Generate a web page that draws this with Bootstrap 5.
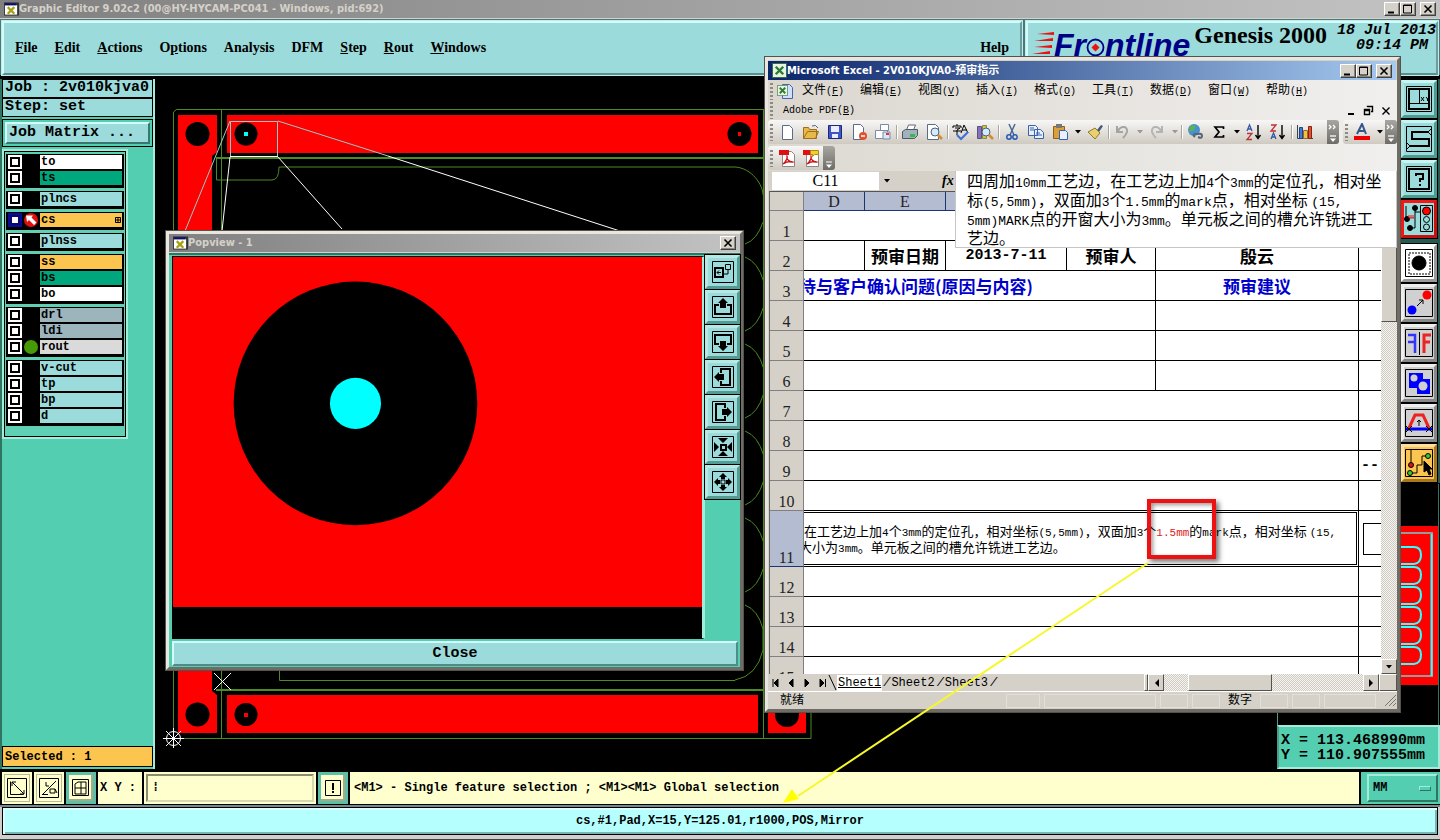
<!DOCTYPE html>
<html lang="en">
<head>
<meta charset="utf-8">
<meta name="viewport" content="width=device-width, initial-scale=1">
<title>Graphic Editor 9.02c2</title>
<link rel="stylesheet" href="https://cdn.jsdelivr.net/npm/bootstrap@5.3.0/dist/css/bootstrap.min.css">
<script src="https://cdn.jsdelivr.net/npm/bootstrap@5.3.0/dist/js/bootstrap.bundle.min.js"></script>
<style>
:root{--aqua:#9cdbdb;--teal:#54ceb0;--hi:#d3fbfa;--lo:#4f8383;--tealhi:#a2ecd9;--teallo:#2f7562;--win:#d5d1c9;--cream:#ffffce;--gold:#fcc550;--green:#4c8a22}
body{font-family:"Liberation Sans","Noto Sans CJK SC",sans-serif;background:#000;color:#000;font-size:12px;line-height:16px}
button,input,select{font:inherit;color:inherit;padding:0;border-radius:0}
button{display:inline-flex;align-items:center;justify-content:center}
svg{display:block;flex:none}
a{color:inherit;text-decoration:none}
.mono15{font:bold 15px/16px "Liberation Mono",monospace}
.mono12{font:bold 12px/14px "Liberation Mono",monospace}
.caption{font:bold 11px/16px "DejaVu Sans Condensed","Noto Sans CJK SC",sans-serif;white-space:nowrap}
.winbtn{width:16px;height:14px;background:var(--win);border:1px solid;border-color:#fff #404040 #404040 #fff;box-shadow:inset -1px -1px #8a8780}
.titlebar{height:19px;background:linear-gradient(90deg,#808080,#c3c3c3);color:#d5d1c9;border-bottom:1px solid #d5d1c9}
/* top band */
.topband{height:56px;background:#4d7777;gap:4px;padding:2px 2px 0}
.bevel{background:var(--aqua);border:2px solid;border-color:var(--hi) var(--lo) var(--lo) var(--hi)}
.topband .bevel{border-color:var(--hi) #6d9c9c #5e8e8e var(--hi);outline:1px solid #bdeeee}
.mainmenu{gap:17px;font:bold 14px/18px "Liberation Serif",serif;padding:0 11px}
.brandbox{width:412px;padding-left:4px}
.brandname{font:italic bold 32px/32px "Liberation Sans",sans-serif;color:#000087;margin-top:6px}
.product{font:bold 24px/24px "Liberation Serif",serif}
.clock{font:italic bold 15px/15px "Liberation Mono",monospace}
/* layer column */
.side{width:155px;background:var(--teal);border-left:2px solid var(--teallo);border-right:2px solid var(--tealhi)}
.readbox{background:var(--aqua);border:1px solid #000;height:19px;padding:0 2px;white-space:nowrap}
.selbox{background:var(--gold);height:21px;padding-top:3px;margin-bottom:2px}
.jobframe{border:1px solid #000;padding:2px;margin-top:2px}
.jobbtn{height:22px;background:var(--aqua);border:2px solid;border-color:var(--hi) #39776e #39776e var(--hi);padding:0 2px}
.layers{width:122px;border:1px solid #000;outline:2px solid var(--tealhi);padding:2px 1px 10px;gap:3px;background:#5fd0b4;margin:4px 0 0 2px}
.lgroup{background:#000;padding:1px 2px}
.lrow{height:16px}
.lrow label{flex:1;height:14px;padding-left:1px;background:var(--aqua);color:#000}
.lrow input{appearance:none;width:14px;height:14px;margin:0;border:2px solid #fff;background:#fff;box-shadow:inset 0 0 0 2px #000}
.lrow input:checked{border-color:#0a0a9c;box-shadow:inset 0 0 0 2px #0a0a6c}
.lrow svg{width:18px;height:14px}
.lrow .l-white{background:#fff}.lrow .l-green{background:#00a67c}.lrow .l-gold{background:var(--gold)}.lrow .l-slate{background:#9cb4bc}.lrow .l-gray{background:#dadada}
/* right column */
.rightcol{width:163px}
.workarea{padding:4px 0 2px}
.rail{width:39px;background:#245a50;padding:1px 2px 1px 0;gap:2px}
.rail button{width:36px;height:38px;border:3px solid;border-color:#c8f4f1 #4e9b92 #4e9b92 #b0e4e0;background:var(--aqua);outline:1px solid #000}
.rail button.grayed{background:#d0d0d0;border-color:#eee #888 #888 #eee}
.rail button.whited{background:#fff;border-color:#fff #999 #999 #fff}
.rail button.golden{background:var(--gold);border-color:#ffe0a0 #a87820 #a87820 #ffe0a0}
.rail button.redded{border-color:#f21818 #c81010 #c81010 #f21818}
.coords{height:44px;background:var(--teal);border:2px solid;border-color:var(--tealhi) var(--tealhi) var(--tealhi) #4f9c88;padding:6px 2px 0}
.coords div{line-height:15px}
/* command bar */
.cmdbar{height:34px;gap:2px;padding:1px 0 1px 2px}
.cmdbar .cream{background:var(--cream)}
.cmdbar .toolb{width:30px;background:var(--cream);border:2px solid var(--cream);box-shadow:inset 0 0 0 1px #b8b89a}
.cmdbar .tealed{border:3px solid #5cbfa8;box-shadow:inset -2px -2px #a9a985}
.cmdbar label{padding:0 6px 0 2px}
.cmdbar input{width:168px;height:28px;margin:0 2px;background:var(--cream);border:2px solid;border-color:#8c8c70 #d8d8b0 #d8d8b0 #8c8c70;padding:0 4px}
.unit{width:79px;background:var(--teal);padding:2px 2px 2px 6px}
.unit select{appearance:none;background:var(--teal);border:2px solid;border-color:var(--tealhi) var(--teallo) var(--teallo) var(--tealhi);padding-left:4px}
.knob{right:9px;top:14px;width:12px;height:5px;background:var(--teal);border:1px solid;border-color:var(--tealhi) var(--teallo) var(--teallo) var(--tealhi)}
.statusline{height:35px;background:#cfcfcf;border-top:2px solid #708c8c;border-bottom:1px solid #404040;padding:0 2px 4px}
.statusline>div{background:#b5ffff;border:1px solid #000;box-shadow:inset 2px 2px #dcffff,inset -2px -2px #79b5b5}
/* windows over the desktop */
.window{background:var(--win);border:3px solid;border-color:#e9e6df #6f6c66 #6f6c66 #e9e6df;outline:1px solid #55524c}
.popview{left:166px;top:231px;width:577px;height:439px}
.popbody{background:var(--teal);border-top:2px solid var(--teallo)}
.popcanvas{flex:1 1 0;min-width:0;border:1px solid #000;border-right:3px solid var(--tealhi);background:#000;margin-left:3px;margin-top:1px}
.poptools{width:35px;gap:1px}
.poptools button{width:35px;height:34px;border:3px solid;border-color:#b6e9e4 #549b93 #549b93 #b6e9e4;background:var(--aqua);outline:1px solid #000}
.closebtn{height:25px;background:var(--aqua);border:2px solid;border-color:var(--hi) #4d8d88 #4d8d88 var(--hi);margin:2px 2px 1px 3px}
.excel{left:765px;top:57px;width:635px;height:655px;font-family:"Liberation Mono","Noto Sans CJK SC",monospace}
.exceltitle{height:19px;background:linear-gradient(90deg,#0a246a,#a6caf0);color:#fff;margin:1px 1px 0 0}
.exmenus{background:linear-gradient(90deg,#dbd7cf,#f1efee);height:40px;padding-top:2px}
.exmenus a{width:58px;font-size:12px;line-height:18px;white-space:nowrap}
.exmenus a span{font-size:10px}
.grip{width:3px;height:17px;margin:0 2px;background:repeating-linear-gradient(#8d8a83 0 2px,transparent 2px 4px)}
.toolrow{background:linear-gradient(90deg,#dcd9d1,#f0efed)}
.toolrow.second{padding:2px 0 1px}
.strip{height:24px;background:linear-gradient(#f8f7f6,#cfcac1);border-radius:3px}
.strip button{width:24px;height:22px;border:0;background:none}
.strip button.drop{width:11px}
.strip .sepv{width:1px;height:14px;margin:0 1px;background:#a9a69e;box-shadow:1px 0 #fff}
.strip .more{width:12px;height:24px;background:linear-gradient(#a8a6a0,#6e6c68);border-radius:0 3px 3px 0}
.fbar{height:20px}
.fbar input{width:107px;border:0;background:#fff;text-align:center;font:16px/18px "Liberation Serif",serif}
.fxmark{left:174px;font:italic bold 14px/16px "Liberation Serif",serif}
.fpop{left:187px;top:0;right:0;height:77px;background:#fff;border:1px solid #c6c6c6;border-top:0;padding:0 0 0 11px;font-size:16px;line-height:19px;white-space:nowrap;font-family:"Noto Sans CJK SC",sans-serif;z-index:2}
.fpop i{font:normal 13px/1px "Liberation Mono",monospace}
.gridbox{height:483px;border-top:1px solid #555;border-left:1px solid #666;background:#fff;margin-left:1px}
.sheet{table-layout:fixed;border-collapse:separate;border-spacing:0;width:100%}
.sheet th{font:16px/17px "Liberation Serif",serif;text-align:center;padding:0;color:#222}
.sheet thead th{height:19px;background:#b4bcd2;border-right:1px solid #1c3472;border-bottom:1px solid #1c3472}
.sheet thead th:first-child,.sheet tbody th{background:var(--win);border-right:1px solid #808080;border-bottom:1px solid #808080}
.sheet tbody th{vertical-align:bottom}
.sheet td{height:30px;padding:0;border-right:1px solid #000;border-bottom:1px solid #000;white-space:nowrap;overflow:hidden;text-align:center;vertical-align:middle}
.sheet td:last-child{border-right:0}
.sheet .picked th{background:#b4bcd2;border-bottom-color:#1c3472}
.sheet .picked td{height:56px}
.cellhead{font:bold 17px/20px "Noto Sans CJK SC",sans-serif}
.celldate{font:bold 15px/20px "Liberation Mono",monospace}
.ask{color:#00c}
.runover{margin-left:-5px}
.longtext{border:solid #000;border-width:1px 1px 1px 0;height:53px;margin-right:1px;font:13px/16px "Noto Sans CJK SC",sans-serif;text-align:left;padding-top:10px;overflow:hidden}
.longtext i{font:normal 11px/1px "Liberation Mono",monospace}
.longtext .hot{color:#d22}
.besidebox{height:32px;border:1px solid #000;border-right:0}
.dither{background:repeating-conic-gradient(#d0ccc4 0 25%,#f4f3f0 0 50%) 0 0/2px 2px}
.raised{background:var(--win);border:1px solid;border-color:#fff #55524c #55524c #fff}
.vbar{flex:none;width:16px}
.vbar span{height:130px}.vbar button{height:15px}
.tabs{height:17px;margin-left:2px;font-size:12px}
.tabs a{padding:0 1px;margin-right:1px}
.hbar{flex:none;width:253px}
.hbar button{width:16px}
.hbar .stub{width:4px}.hbar .thumb{width:84px}.hbar .corner{width:18px}
.slot{border:1px solid #e2dfd8;height:14px;width:28px}
.slot.w34{width:34px}.slot.w112{width:112px}.slot.w52{width:52px}
.exstatus{height:18px;border-top:1px solid #fff}
.callout{left:1147px;top:499px;width:69px;height:60px;border:4px solid #ee1111;box-shadow:3px 3px 5px #0008,inset 2px 2px 4px #0006}
.pointer{left:0;top:0}
</style>
</head>
<body class="vh-100 overflow-hidden d-flex flex-column position-relative m-0">
<svg width="0" height="0" class="position-absolute" aria-hidden="true">
<symbol id="xwin" viewBox="0 0 16 14"><path fill="#333" d="M0 0h16v14H0z"/><path fill="#fff" d="M1 3h13v10H1z"/><path fill="#0b0b80" d="M1 1h12v2H1z"/><path d="M4 5l7 7M11 5l-7 7" stroke="#a8a010" stroke-width="2.4"/></symbol>
<symbol id="gmin" viewBox="0 0 12 10"><path d="M2 8.500h6" stroke="#000" stroke-width="2"/></symbol>
<symbol id="gmax" viewBox="0 0 12 10"><path d="M1.500 1v8h8V1zM1 1.500h9" fill="none" stroke="#000"/></symbol>
<symbol id="gclose" viewBox="0 0 12 10"><path d="M2.500 1.500l7 7M9.500 1.500l-7 7" stroke="#000" stroke-width="1.600"/></symbol>
<symbol id="xl" viewBox="0 0 16 16"><path fill="#e8f3e4" stroke="#2d6b35" d="M.5.5h15v15H.5z"/><path d="M4 4l8 8M12 4l-8 8" stroke="#2b7b33" stroke-width="2.600"/></symbol>
<symbol id="down" viewBox="0 0 8 4"><path d="M1 0h6L4 3.500z"/></symbol>
<symbol id="chev" viewBox="0 0 12 24"><path d="M2 5l2 2-2 2M6 5l2 2-2 2" fill="none" stroke="#fff" stroke-width="1.300"/><path d="M3 16h6" stroke="#fff" stroke-width="1.300"/><path d="M3 18.500h6L6 22z" fill="#fff"/></symbol>
<symbol id="lens" viewBox="0 0 18 18"><circle cx="10" cy="9" r="4" fill="#d6eafc" stroke="#48627e"/><path d="M13 12l4 4" stroke="#d58a30" stroke-width="2.500"/></symbol>
<symbol id="pdf" viewBox="0 0 18 18"><path fill="#fff" stroke="#888" d="M4.500 2.500h9l3 3v12h-12z"/><path fill="#d11" d="M1 1h10v5H1z"/><path d="M5 15c3-2 5-7 4-8-1 3 3 7 6 6-3-1-7 0-10 2" fill="none" stroke="#c11" stroke-width="1.300"/></symbol>
</svg>

<header>
<div class="titlebar d-flex align-items-center ps-1">
<svg width="15" height="14"><use href="#xwin"/></svg><span class="caption flex-grow-1">Graphic Editor 9.02c2 (00@HY-HYCAM-PC041 - Windows, pid:692)</span>
<button class="winbtn" aria-label="Minimize"><svg width="12" height="10"><use href="#gmin"/></svg></button><button class="winbtn" aria-label="Maximize"><svg width="12" height="10"><use href="#gmax"/></svg></button><button class="winbtn ms-1 me-1" aria-label="Close"><svg width="12" height="10"><use href="#gclose"/></svg></button>
</div>
<div class="topband d-flex">
<nav class="bevel mainmenu d-flex align-items-center flex-grow-1" aria-label="Main">
<a href="#"><u>F</u>ile</a><a href="#"><u>E</u>dit</a><a href="#"><u>A</u>ctions</a><a href="#">O<u>p</u>tions</a><a href="#">Analysis</a><a href="#">DFM</a><a href="#"><u>S</u>tep</a><a href="#"><u>R</u>out</a><a href="#"><u>W</u>indows</a><a href="#" class="ms-auto">Help</a>
</nav>
<div class="bevel brandbox d-flex align-items-start">
<div class="brandname d-flex" aria-label="Frontline"><svg width="22" height="28" viewBox="0 0 22 28"><path d="M5 5L23 3v3zM2 12l19-3v3zM2 18l18-2v3zM0 25l18-3v3z" fill="#e11"/></svg><span>Fr</span><svg width="19" height="32" viewBox="0 0 19 32"><circle cx="9.500" cy="18.500" r="8" fill="none" stroke="#000087" stroke-width="1.800"/><path d="M9.500 14.500l4 4-4 4-4-4z" fill="#e11"/></svg><span>ntline</span></div>
<div class="product ms-1 flex-grow-1 text-nowrap">Genesis 2000</div>
<div class="clock text-end text-nowrap"><div>18 Jul 2013</div><div class="pe-2">09:14 PM</div></div>
</div>
</div>
</header>

<main class="workarea d-flex flex-grow-1 overflow-hidden">
<aside class="side d-flex flex-column">
<div class="readbox mono15">Job : 2v010kjva0</div>
<div class="readbox mono15">Step: set</div>
<div class="jobframe"><button class="jobbtn mono15 w-100 justify-content-start">Job Matrix ...</button></div>
<div class="layers d-flex flex-column mono12">
<div class="lgroup">
<div class="lrow d-flex"><input type="checkbox" id="l1"><svg></svg><label for="l1" class="l-white">to</label></div>
<div class="lrow d-flex"><input type="checkbox" id="l2"><svg></svg><label for="l2" class="l-green">ts</label></div>
</div>
<div class="lgroup"><div class="lrow d-flex"><input type="checkbox" id="l3"><svg></svg><label for="l3">plncs</label></div></div>
<div class="lgroup"><div class="lrow d-flex"><input type="checkbox" id="l4" checked><svg viewBox="0 0 18 14"><circle cx="9" cy="7" r="7" fill="#e01010"/><path d="M4 2.500h7L9.500 4.500l5 5-2.500 2.500-5-5L5 9z" fill="#fff"/></svg><label for="l4" class="l-gold d-flex justify-content-between align-items-center">cs<svg viewBox="0 0 18 14"><path d="M11.500 4.500h5v5h-5zM14 4.500v5M11.500 7h5" fill="none" stroke="#000"/></svg></label></div></div>
<div class="lgroup"><div class="lrow d-flex"><input type="checkbox" id="l5"><svg></svg><label for="l5">plnss</label></div></div>
<div class="lgroup">
<div class="lrow d-flex"><input type="checkbox" id="l6"><svg></svg><label for="l6" class="l-gold">ss</label></div>
<div class="lrow d-flex"><input type="checkbox" id="l7"><svg></svg><label for="l7" class="l-green">bs</label></div>
<div class="lrow d-flex"><input type="checkbox" id="l8"><svg></svg><label for="l8" class="l-white">bo</label></div>
</div>
<div class="lgroup">
<div class="lrow d-flex"><input type="checkbox" id="l9"><svg></svg><label for="l9" class="l-slate">drl</label></div>
<div class="lrow d-flex"><input type="checkbox" id="l10"><svg></svg><label for="l10" class="l-slate">ldi</label></div>
<div class="lrow d-flex"><input type="checkbox" id="l11"><svg viewBox="0 0 18 14"><circle cx="9" cy="7" r="7" fill="#459a05"/></svg><label for="l11" class="l-gray">rout</label></div>
</div>
<div class="lgroup">
<div class="lrow d-flex"><input type="checkbox" id="l12"><svg></svg><label for="l12">v-cut</label></div>
<div class="lrow d-flex"><input type="checkbox" id="l13"><svg></svg><label for="l13">tp</label></div>
<div class="lrow d-flex"><input type="checkbox" id="l14"><svg></svg><label for="l14">bp</label></div>
<div class="lrow d-flex"><input type="checkbox" id="l15"><svg></svg><label for="l15">d</label></div>
</div>
</div>
<div class="readbox selbox mono12 mt-auto">Selected : 1</div>
</aside>

<section class="flex-grow-1 overflow-hidden" aria-label="Board">
<svg class="w-100 h-100" viewBox="155 79 1122 690" preserveAspectRatio="xMinYMin slice">
<path fill="#f00" d="M178 115h39v37l-5 4v535l5 4v38h-39zM227 115h531v38H227zM227 695h531v38H227zM768 700h38v33h-38z"/>
<g fill="#000"><circle cx="197.500" cy="134" r="12"/><circle cx="246" cy="134" r="11.500"/><circle cx="739.500" cy="134" r="12"/><circle cx="197.500" cy="714.500" r="12"/><circle cx="246" cy="714.500" r="11.500"/><circle cx="787" cy="715" r="12"/></g>
<path fill="#0ff" d="M244 132h4v4h-4z"/><path fill="#f00" d="M738 132h3v4h-3zM244 713h4v4h-4z"/>
<g fill="none" stroke="#4c8a22">
<path d="M173.500 738V112l3-2.500H763M173.500 738.500H811V700M221.500 109v629M216.500 158v22H272q7 0 7-13H735C752 168 763 185 763 195M763 222Q757 240 745 244M279.500 670v10.500H735"/>
<path stroke-width="2" d="M216 158H763M216 690H763"/><path d="M763.500 109V738"/>
<path id="scal" d="M745 257Q758 262 763.500 281V307Q758 326 745 331"/><use href="#scal" y="87"/><use href="#scal" y="174"/><use href="#scal" y="261"/><path d="M745 605Q758 610 763 629V650Q757 676 735 680"/></g>
<path fill="none" stroke="#9ccaca" d="M230.500 121.500h47v35h-47zM230 121L185 231M278 121L388 156"/>
<path fill="none" stroke="#fff" d="M230 157L222 231M278 157L342 229M388 156L620 231M230 156.500h48M214 673l17 17M231 673l-17 17M163 738.500h21M173.500 728v20M166 731l15 15M181 731l-15 15"/><circle cx="173.500" cy="738.500" r="7" fill="none" stroke="#fff"/>
</svg>
</section>

<aside class="rightcol d-flex flex-column">
<div class="rail d-flex flex-column align-self-end">
<button aria-label="Zoom window"><svg width="30" height="30" fill="none" stroke="#000"><path d="M2.500 2.500h25v25h-25z"/><path stroke-width="2" d="M5 5h20v20H5z"/><path d="M15.500 5v15M5 19.500h20"/><path d="M17 13l3 4m0-4l-3 4m5-4l1.500 2 1.500-2m-1.500 2v2"/></svg></button>
<button aria-label="Snake"><svg width="30" height="30" fill="none" stroke="#000"><path d="M2.500 2.500h25v25h-25z"/><path stroke-width="2" d="M25 8H8v7h17v7H6"/><path d="M3 19l3 3-3 3M27 5l-3 3 3 3"/></svg></button>
<button aria-label="Query"><svg width="30" height="30" fill="none" stroke="#000"><path d="M2.500 2.500h25v25h-25z"/><path stroke-width="2" d="M5 5h20v20H5zM12 12v-2h7v5h-3v3m0 2v2"/></svg></button>
<button class="redded" aria-label="Netlist"><svg width="30" height="30" fill="none" stroke="#000"><path d="M2 2v14M11 4v20H4M2 16h3m6-8h5M16.500 1.500h12v26h-12z"/><circle cx="11" cy="4" r="2.500" fill="#000"/><circle cx="3" cy="15" r="2.500" fill="#000"/><circle cx="6" cy="24" r="2.500" fill="#000"/><path d="M5 11v3m2-3v3m2-3v3m-4 0h5" stroke="#e11"/><circle cx="22.500" cy="7" r="4" fill="#f00"/><circle cx="22.500" cy="15.500" r="3"/><circle cx="22.500" cy="23" r="3"/></svg></button>
<button class="whited mt-1" aria-label="Select pad"><svg width="30" height="30" fill="none" stroke="#000"><path d="M1.500 1.500h27v27h-27z"/><path stroke-dasharray="2 1" d="M5 5h21v21H5z"/><circle cx="15" cy="15" r="7" fill="#000"/></svg></button>
<button class="grayed" aria-label="Move"><svg width="30" height="30"><path d="M1.500 1.500h27v27h-27z" fill="none" stroke="#000"/><circle cx="23" cy="7" r="4.500" fill="#f00"/><circle cx="8" cy="22" r="4.500" fill="#00f"/><path d="M13 18l6-6m-4 0h4v4" fill="none" stroke="#000"/></svg></button>
<button class="grayed" aria-label="Mirror"><svg width="30" height="30" fill="none"><path d="M1.500 1.500h27v27h-27zM15.500 4v23" stroke="#000"/><path d="M4 7h7v18M4 14h7" stroke="#33f" stroke-width="2.500"/><path d="M27 7h-7v18M26 14h-6" stroke="#e22" stroke-width="3"/></svg></button>
<button class="grayed" aria-label="Copy"><svg width="30" height="30"><path d="M1.500 1.500h27v27h-27z" fill="none" stroke="#000"/><path fill="#00f" d="M5 5h14v6h7v15H13v-6H5z"/><circle cx="10" cy="10" r="3.500" fill="#d0d0d0"/><circle cx="19" cy="18" r="4.500" fill="#d0d0d0"/></svg></button>
<button class="grayed" aria-label="Stretch"><svg width="30" height="30" fill="none"><path d="M1.500 1.500h27v27h-27z" stroke="#000"/><path d="M2 21h26" stroke="#00f" stroke-width="3"/><path d="M5 20L11 7h8l6 13" stroke="#e22" stroke-width="3"/><path d="M15 18v-6m-2 2l2-2 2 2M2 18l6 6m0-6l-6 6M22 18l6 6m0-6l-6 6" stroke="#000"/></svg></button>
<button class="golden" aria-label="Edit line"><svg width="30" height="30" fill="none" stroke="#000"><path d="M1.500 1.500h27v27h-27zM7 2v15M6 25h7v-8h5v-9h6" /><circle cx="7" cy="17" r="2.500" fill="#d11"/><circle cx="6" cy="25" r="2.500" fill="#3c3"/><circle cx="24" cy="8" r="2.500" fill="#3c3"/><path fill="#000" d="M20 13v11l3-2 2 5 2-1-2-5h3z"/></svg></button>
</div>
<svg class="w-100 flex-grow-1" height="0" viewBox="1277 483 163 242" preserveAspectRatio="xMaxYMax slice">
<path d="M1277.500 484V725" stroke="#4f9c88"/><path fill="#f00" d="M1390 526h48v159h-48z"/><path d="M1438.500 484V725" stroke="#2f7562"/><path fill="none" stroke="#999" stroke-width="2" d="M1390 533h42v143h-42"/><path d="M1431.500 534v142" stroke="#3ff" stroke-width="2"/>
<g fill="none" stroke="#3ff" stroke-width="2"><path id="lp" d="M1390 547h24q7 0 7 8t-7 9h-24"/><use href="#lp" y="20"/><use href="#lp" y="40"/><use href="#lp" y="60"/><use href="#lp" y="80"/><use href="#lp" y="100"/></g>
</svg>
<div class="coords mono15 text-nowrap"><div>X = 113.468990mm</div><div>Y = 110.907555mm</div></div>
</aside>
</main>

<footer>
<div class="cmdbar d-flex mono12">
<button class="toolb" aria-label="Absolute"><svg width="20" height="20" fill="none" stroke="#000"><path d="M.5.5h19v19H.5zM3.500 3.500v13h13M5 4l12 12M5 8V4h4M17 12v4h-4"/></svg></button>
<button class="toolb" aria-label="Angle"><svg width="20" height="20" fill="none" stroke="#000"><path d="M.5.5h19v19H.5zM4 16.500h5M3 17L17 3M7 4v4h3M11 11h5v4h-5zM16 11l2 4"/></svg></button>
<button class="toolb tealed" aria-label="Grid"><svg width="18" height="18" fill="none" stroke="#000"><path d="M.5.500h16v16H.5zM3 5l3-2h8v12H3zM9 3v12M3 9h11"/></svg></button>
<label for="xy" class="cream d-flex align-items-center">X Y :</label>
<div class="cream d-flex align-items-center"><input id="xy" type="text" value="⁞"></div>
<button class="toolb tealed" aria-label="Alert"><svg width="16" height="16" fill="none" stroke="#000"><path d="M.5.5h15v15H.5z"/><path stroke-width="2" d="M8 3v7M8 11v2"/></svg></button>
<div class="cream flex-grow-1 d-flex align-items-center ps-1">&lt;M1&gt; - Single feature selection ; &lt;M1&gt;&lt;M1&gt; Global selection</div>
<div class="unit position-relative"><select class="w-100 h-100" aria-label="Units"><option>MM</option></select><span class="knob position-absolute"></span></div>
</div>
<div class="statusline"><div class="mono12 h-100 d-flex align-items-center justify-content-center">cs,#1,Pad,X=15,Y=125.01,r1000,POS,Mirror</div></div>
</footer>

<section class="window popview position-absolute d-flex flex-column" aria-label="Popview">
<div class="titlebar d-flex align-items-center ps-1"><svg width="15" height="14"><use href="#xwin"/></svg><span class="caption flex-grow-1">Popview - 1</span><button class="winbtn me-1" aria-label="Close"><svg width="12" height="10"><use href="#gclose"/></svg></button></div>
<div class="popbody d-flex flex-column flex-grow-1">
<div class="d-flex flex-grow-1">
<svg class="popcanvas" viewBox="173 256 528 380" preserveAspectRatio="xMinYMin slice"><path fill="#f00" d="M173 256h529v349H173z"/><circle cx="355" cy="402" r="121.500"/><circle cx="355" cy="402" r="25.500" fill="#0ff"/></svg>
<div class="poptools d-flex flex-column">
<button aria-label="Zoom home"><svg width="22" height="22" fill="none" stroke="#000"><path d="M.5.5h21v21H.5z"/><path stroke-width="2" d="M3 7h8v9H3z"/><path d="M13.500 3.500h5v5h-5zM16 9v4h-5M9 11.500H5m2-2l-2 2 2 2"/></svg></button>
<button aria-label="Pan up"><svg width="22" height="22"><path id="pf" d="M.5.5h21v21H.5z" fill="none" stroke="#000"/><g id="pu"><path d="M7 9H3v9h16V9h-4" fill="none" stroke="#000" stroke-width="2"/><path d="M11 2l5 5h-2v5H8V7H6z"/></g></svg></button>
<button aria-label="Pan down"><svg width="22" height="22"><use href="#pf"/><use href="#pu" transform="rotate(180 11 11)"/></svg></button>
<button aria-label="Pan left"><svg width="22" height="22"><use href="#pf"/><use href="#pu" transform="rotate(270 11 11)"/></svg></button>
<button aria-label="Pan right"><svg width="22" height="22"><use href="#pf"/><use href="#pu" transform="rotate(90 11 11)"/></svg></button>
<button aria-label="Zoom in"><svg width="22" height="22"><use href="#pf"/><path d="M9 9h5v5H9z" fill="none" stroke="#000" stroke-width="2"/><path d="M11 7L6 2h10zM11 15l5 5H6zM7 11l-5 5V6zM15 11l5-5v10z"/></svg></button>
<button aria-label="Zoom out"><svg width="22" height="22"><use href="#pf"/><path d="M9 9h4v4H9z" fill="none" stroke="#000"/><path d="M11 2l4 4h-2v2H9V6H7zM11 20l4-4h-2v-2H9v2H7zM2 11l4-4v2h2v4H6v2zM20 11l-4-4v2h-2v4h2v2z"/></svg></button>
</div>
</div>
<button class="closebtn mono15">Close</button>
</div>
</section>

<section class="window excel position-absolute" aria-label="Microsoft Excel">
<div class="exceltitle d-flex align-items-center ps-1"><svg width="15" height="15"><use href="#xl"/></svg><span class="caption flex-grow-1">Microsoft Excel - 2V010KJVA0-预审指示</span>
<button class="winbtn" aria-label="Minimize"><svg width="12" height="10"><use href="#gmin"/></svg></button><button class="winbtn" aria-label="Maximize"><svg width="12" height="10"><use href="#gmax"/></svg></button><button class="winbtn ms-1 me-1" aria-label="Close"><svg width="12" height="10"><use href="#gclose"/></svg></button></div>
<div class="exmenus">
<nav class="d-flex align-items-center" aria-label="Workbook"><span class="grip"></span><svg width="27" height="17" viewBox="0 0 27 17"><path fill="#cfe0fb" stroke="#4a62a8" d="M7.500 1.500h7l3 3v11h-10z"/><svg x="2" y="2" width="11" height="11"><use href="#xl"/></svg></svg><a href="#">文件<span>(<u>F</u>)</span></a><a href="#">编辑<span>(<u>E</u>)</span></a><a href="#">视图<span>(<u>V</u>)</span></a><a href="#">插入<span>(<u>I</u>)</span></a><a href="#">格式<span>(<u>O</u>)</span></a><a href="#">工具<span>(<u>T</u>)</span></a><a href="#">数据<span>(<u>D</u>)</span></a><a href="#">窗口<span>(<u>W</u>)</span></a><a href="#">帮助<span>(<u>H</u>)</span></a></nav>
<div class="d-flex align-items-center"><span class="grip"></span><a href="#" class="ms-2 me-auto w-auto"><span>Adobe PDF(<u>B</u>)</span></a><svg class="me-1" width="46" height="12" fill="none" stroke="#000"><path stroke-width="2" d="M1 9h6"/><path d="M20.500 2v-.5h5v5H24M17.500 4.500h5v5h-5zM17 5.500h6M35.500 2.500l7 7M42.500 2.500l-7 7" stroke-width="1.400"/></svg></div>
</div>
<div class="toolrow d-flex">
<div class="strip d-flex align-items-center flex-grow-1"><span class="grip"></span>
<button aria-label="New"><svg width="18" height="18"><path fill="#fff" stroke="#5a6b8c" d="M4.500 2.500h7l3 3v11h-10z"/></svg></button><button aria-label="Open"><svg width="18" height="18"><path fill="#e8b84a" stroke="#9b6f1c" d="M1.500 15.500v-11h5l1 2h7v9zM1.500 15.500l4-7h11l-3 7z"/><path d="M10 3q4-2 6 2" fill="none" stroke="#567"/></svg></button><button aria-label="Save"><svg width="18" height="18"><path fill="#3f55c8" stroke="#1b2a78" d="M2.500 2.500h13v13h-13z"/><path fill="#e9edff" d="M5 3h8v6H5zM6 11h6v4H6z"/></svg></button><button aria-label="Permission"><svg width="18" height="18"><path fill="#fff" stroke="#5a6b8c" d="M3.500 1.500h7l3 3v12h-10z"/><circle cx="13" cy="13" r="4" fill="#e0512d"/><path d="M11 13h4" stroke="#fff" stroke-width="1.500"/></svg></button><button aria-label="Mail"><svg width="18" height="18"><path fill="#fff" stroke="#7b8aa8" d="M6.500 1.500h8v6h-8zM1.500 7.500h12v8h-12z"/><path d="M9 9h7v7H9z" fill="#dce6fb" stroke="#7b8aa8"/><path d="M12 10h3v2h-3z" fill="#d33"/></svg></button>
<span class="sepv"></span><button aria-label="Print"><svg width="18" height="18"><path fill="#fff" stroke="#667" d="M5.500 7l2-5h7l-2 5z"/><path fill="#9fb2bd" stroke="#4a5a66" d="M1.500 8.500l3-2h12v6l-3 3h-12z"/><path fill="#3b4" d="M9 11h5v3H9z"/></svg></button><button aria-label="Preview"><svg width="18" height="18"><path fill="#fff" stroke="#5a6b8c" d="M2.500 1.500h8l3 3v12h-11z"/><use href="#lens" width="18" height="18"/></svg></button>
<span class="sepv"></span><button aria-label="Spelling"><svg width="18" height="18"><path d="M5 1v2M1 5V3h8v2M3 5h5L5 7v5M1 8h8M9 10l3-8 4 8M10 7h5" fill="none" stroke="#000"/><path d="M5 12l4 4 7-7" fill="none" stroke="#3b70d8" stroke-width="2"/></svg></button><button aria-label="Research"><svg width="18" height="18"><path fill="#8a6fc0" stroke="#557" d="M1.500 3.500h4v12h-4z"/><path fill="#d8c34a" stroke="#885" d="M6.500 2.500h4v13h-4z"/><use href="#lens" width="18" height="18"/></svg></button>
<span class="sepv"></span><button aria-label="Cut"><svg width="18" height="18" fill="none"><path d="M6 1l5 11M12 1L7 12" stroke="#48698f" stroke-width="1.500"/><circle cx="6" cy="14" r="2.200" stroke="#2558b8" stroke-width="1.500"/><circle cx="12" cy="14" r="2.200" stroke="#2558b8" stroke-width="1.500"/></svg></button><button aria-label="Copy"><svg width="18" height="18" fill="#e8f0ff" stroke="#3b62a8"><path d="M1.500 2.500h7l2 2v8h-9zM7.500 6.500h6l3 3v6h-9z"/><path d="M9 10h4m-4 2h6M3 5h4M3 7h4"/></svg></button><button aria-label="Paste"><svg width="18" height="18"><path fill="#dba038" stroke="#8b5f14" d="M2.500 3.500h11v12h-11z"/><path fill="#777" d="M5 1h6v4H5z"/><path fill="#e8f0ff" stroke="#3b62a8" d="M8.500 7.500h6l2 2v7h-8z"/></svg></button><button class="drop" aria-label="Paste options"><svg width="8" height="4"><use href="#down"/></svg></button><button aria-label="Format painter"><svg width="18" height="18"><path d="M11 7l4-5 2 1-4 6z" fill="#46567a"/><path fill="#ead06c" stroke="#8b7a30" d="M2 9l7-4 5 5-5 6z"/></svg></button>
<span class="sepv"></span><button aria-label="Undo"><svg width="18" height="18" fill="none" stroke="#a4a4a4" stroke-width="2"><path d="M5 8c3-6 10-5 9 1-1 3-2 4-4 6M4 3v6h6"/></svg></button><button class="drop" aria-label="Undo list"><svg width="8" height="4" fill="#999"><use href="#down"/></svg></button><button aria-label="Redo"><svg width="18" height="18" fill="none" stroke="#b4b4b4" stroke-width="2"><path d="M13 8C10 2 3 3 4 9c1 3 2 4 4 6M14 3v6H8"/></svg></button><button class="drop" aria-label="Redo list"><svg width="8" height="4" fill="#999"><use href="#down"/></svg></button>
<span class="sepv"></span><button aria-label="Hyperlink"><svg width="18" height="18"><circle cx="8" cy="7" r="6" fill="#4a8fd0"/><path d="M4 3q5-2 6 1l-3 4-4 1z" fill="#5ab357"/><path d="M9 14q-3-2 0-3h3m0 3q4 2 4-1t-4-2" fill="none" stroke="#567" stroke-width="2"/></svg></button><button aria-label="AutoSum"><svg width="18" height="18" fill="none" stroke="#000" stroke-width="1.700"><path d="M13.500 6V4H5l4 5-4 5h8.500v-2"/></svg></button><button class="drop" aria-label="Functions"><svg width="8" height="4"><use href="#down"/></svg></button><button aria-label="Sort ascending"><svg width="18" height="18" fill="none"><path d="M2 8l2.500-6L7 8M3 6h3" stroke="#3558a8" stroke-width="1.300"/><path d="M2 10.500h5l-5 6h5" stroke="#b33" stroke-width="1.300"/><path d="M13 2v13m-2.500-3l2.500 3.500 2.500-3.500" stroke="#000" stroke-width="1.400"/></svg></button><button aria-label="Sort descending"><svg width="18" height="18" fill="none"><path d="M2 16l2.500-6L7 16M3 14h3" stroke="#3558a8" stroke-width="1.300"/><path d="M2 2h5L2 8h5" stroke="#b33" stroke-width="1.300"/><path d="M13 2v13m-2.500-3l2.500 3.500 2.500-3.500" stroke="#000" stroke-width="1.400"/></svg></button>
<span class="sepv"></span><button aria-label="Chart"><svg width="18" height="18"><path d="M1.500 2v13.500H17" fill="none" stroke="#345"/><path fill="#3f7ad8" stroke="#247" d="M3.500 4.500h3v11h-3z"/><path fill="#f0c040" stroke="#963" d="M7.500 7.500h4v8h-4z"/><path fill="#e0502c" stroke="#821" d="M12.500 3.500h3v12h-3z"/></svg></button>
<button class="more ms-auto" aria-label="More"><svg width="12" height="24"><use href="#chev"/></svg></button></div>
<div class="strip d-flex align-items-center ms-1"><span class="grip"></span><button aria-label="Font colour"><svg width="18" height="18"><path d="M4 11L9 1l4 10M6 8h5" fill="none" stroke="#34548c" stroke-width="2"/><path fill="#e00" d="M1 13h16v4H1z"/></svg></button><button class="drop" aria-label="Colours"><svg width="8" height="4"><use href="#down"/></svg></button><button class="more" aria-label="More"><svg width="12" height="24"><use href="#chev"/></svg></button></div>
</div>
<div class="toolrow second d-flex"><div class="strip d-flex align-items-center"><span class="grip"></span><button aria-label="Create PDF"><svg width="18" height="18"><use href="#pdf"/></svg></button><button aria-label="PDF for review"><svg width="18" height="18"><use href="#pdf"/><path fill="#f3cf2c" stroke="#b08c10" d="M8.500 1.500h8v4h-4l-2 2v-2h-2z"/></svg></button><button class="more" aria-label="More"><svg width="12" height="24"><path d="M3 16h6" stroke="#fff"/><path d="M3 18.500h6L6 22z" fill="#fff"/></svg></button></div></div>
<div class="fbar d-flex align-items-center position-relative"><input class="ms-1" aria-label="Name box" value="C11"><svg class="ms-1" width="8" height="4"><use href="#down"/></svg><b class="fxmark position-absolute">fx</b>
<div class="fpop position-absolute" role="textbox" aria-label="Formula">四周加<i>10mm</i>工艺边，在工艺边上加<i>4</i>个<i>3mm</i>的定位孔，相对坐<br>标<i>(5,5mm)</i>，双面加<i>3</i>个<i>1.5mm</i>的<i>mark</i>点，相对坐标 <i>(15,</i><br><i>5mm)MARK</i>点的开窗大小为<i>3mm</i>。单元板之间的槽允许铣进工<br>艺边。</div></div>
<div class="gridbox d-flex overflow-hidden">
<div class="flex-grow-1 overflow-hidden">
<table class="sheet">
<colgroup><col style="width:34px"><col style="width:61px"><col style="width:81px"><col style="width:121px"><col style="width:89px"><col style="width:203px"><col></colgroup>
<thead><tr><th></th><th>D</th><th>E</th><th>F</th><th>G</th><th>H</th><th></th></tr></thead>
<tbody>
<tr><th>1</th><td colspan="5"></td><td></td></tr>
<tr><th>2</th><td></td><td class="cellhead">预审日期</td><td class="celldate">2013-7-11</td><td class="cellhead">预审人</td><td class="cellhead">殷云</td><td></td></tr>
<tr><th>3</th><td colspan="4"><div class="cellhead ask d-flex overflow-hidden"><span class="runover">待与客户确认问题(原因与内容)</span></div></td><td class="cellhead ask">预审建议</td><td></td></tr>
<tr><th>4</th><td colspan="4"></td><td></td><td></td></tr>
<tr><th>5</th><td colspan="4"></td><td></td><td></td></tr>
<tr><th>6</th><td colspan="4"></td><td></td><td></td></tr>
<tr><th>7</th><td colspan="5"></td><td></td></tr>
<tr><th>8</th><td colspan="5"></td><td></td></tr>
<tr><th>9</th><td colspan="5"></td><td class="celldate">--</td></tr>
<tr><th>10</th><td colspan="5"></td><td></td></tr>
<tr class="picked"><th>11</th><td colspan="5"><div class="longtext">在工艺边上加<i>4</i>个<i>3mm</i>的定位孔，相对坐标<i>(5,5mm)</i>，双面加<i>3</i>个<i class="hot">1.5mm</i>的<i>mark</i>点，相对坐标 <i>(15,</i><br><span class="runover">大</span>小为<i>3mm</i>。单元板之间的槽允许铣进工艺边。</div></td><td class="ps-1"><div class="besidebox"></div></td></tr>
<tr><th>12</th><td colspan="5"></td><td></td></tr>
<tr><th>13</th><td colspan="5"></td><td></td></tr>
<tr><th>14</th><td colspan="5"></td><td></td></tr>
<tr><th>15</th><td colspan="5"></td><td></td></tr>
</tbody>
</table>
</div>
<div class="vbar dither d-flex flex-column justify-content-between"><span class="raised"></span><button class="raised" aria-label="Scroll down"><svg width="8" height="4"><use href="#down"/></svg></button></div>
</div>
<div class="tabs d-flex align-items-center"><svg width="67" height="16"><path d="M3 4v8M8 4v8L4 8zM23 4v8l-4-4zM35 4v8l4-4zM50 4v8l4-4zM55.500 4v8" stroke="#000" stroke-width="1"/><path d="M59 0l7 15" stroke="#000"/></svg><a href="#" class="bg-white"><u>Sheet1</u></a><span class="fst-italic">/</span><a href="#">Sheet2</a><span class="fst-italic">/</span><a href="#">Sheet3</a><span class="fst-italic">/</span>
<div class="hbar dither d-flex ms-auto h-100"><span class="stub raised"></span><button class="raised" aria-label="Scroll left"><svg width="5" height="8"><path d="M5 0v8L1 4z"/></svg></button><span class="thumb raised ms-4"></span><button class="raised ms-auto" aria-label="Scroll right"><svg width="5" height="8"><path d="M0 0v8l4-4z"/></svg></button><span class="corner raised"></span></div></div>
<div class="exstatus d-flex align-items-center ps-2"><span class="me-auto ms-1">就绪</span><span class="slot w34"></span><span class="slot w112 ms-1"></span><span class="slot ms-1"></span><span class="slot ms-1 me-2"></span><span>数字</span><span class="slot ms-2"></span><span class="slot ms-1"></span><span class="slot w52 ms-1 me-2"></span><svg width="13" height="13" stroke="#777"><path d="M1 12L12 1M5 12l7-7M9 12l3-3"/></svg></div>
</section>

<svg class="pointer position-absolute pe-none" width="1220" height="820" aria-hidden="true"><path d="M1148 563L798 796" stroke="#f7f72c" stroke-width="2"/><path d="M783 803l9-14 7 10z" fill="#ff0"/></svg>
<div class="callout position-absolute pe-none"></div>
</body>
</html>
